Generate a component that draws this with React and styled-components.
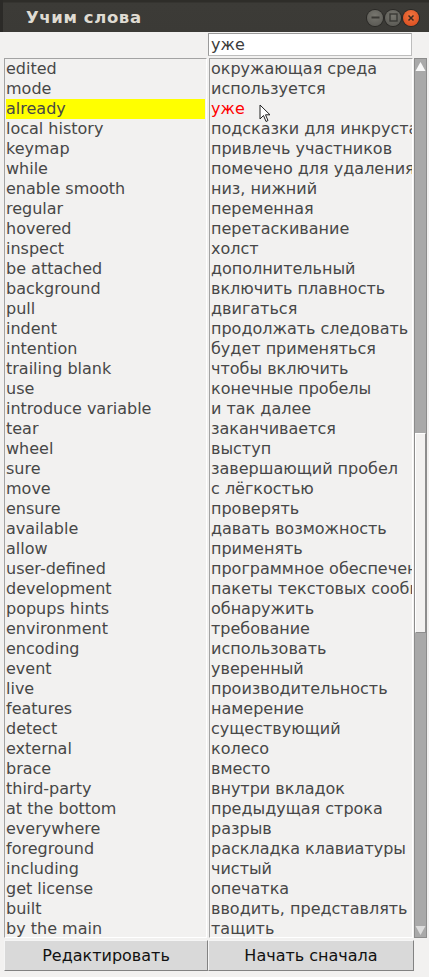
import styled, { createGlobalStyle } from "styled-components"

const GlobalStyle = createGlobalStyle`
	html, body {
		margin: 0;
		padding: 0;
		background: #f2f1f0;
	}
	#root {
		width: 429px;
		height: 977px;
	}
`

const leftWords = [
	"edited", "mode", "already", "local history", "keymap", "while", "enable smooth",
	"regular", "hovered", "inspect", "be attached", "background", "pull", "indent",
	"intention", "trailing blank", "use", "introduce variable", "tear", "wheel", "sure",
	"move", "ensure", "available", "allow", "user-defined", "development", "popups hints",
	"environment", "encoding", "event", "live", "features", "detect", "external", "brace",
	"third-party", "at the bottom", "everywhere", "foreground", "including", "get license",
	"built", "by the main",
]

const rightWords = [
	"окружающая среда", "используется", "уже", "подсказки для инкрустации",
	"привлечь участников", "помечено для удаления", "низ, нижний", "переменная",
	"перетаскивание", "холст", "дополнительный", "включить плавность", "двигаться",
	"продолжать следовать", "будет применяться", "чтобы включить", "конечные пробелы",
	"и так далее", "заканчивается", "выступ", "завершающий пробел", "с лёгкостью",
	"проверять", "давать возможность", "применять", "программное обеспечение",
	"пакеты текстовых сообщений", "обнаружить", "требование", "использовать", "уверенный",
	"производительность", "намерение", "существующий", "колесо", "вместо",
	"внутри вкладок", "предыдущая строка", "разрыв", "раскладка клавиатуры", "чистый",
	"опечатка", "вводить, представлять", "тащить",
]

const Window = styled.div`
	position: relative;
	width: 429px;
	height: 977px;
	background: #f2f1f0;
	font-family: "DejaVu Sans", sans-serif;
	overflow: hidden;
`

const TitleBar = styled.div`
	display: flex;
	align-items: center;
	justify-content: space-between;
	height: 32px;
	box-sizing: border-box;
	padding: 2px 10px 0 23px;
	background: linear-gradient(#2e2d29 0, #2e2d29 2px, #3c3b37 3px, #3b3a36 100%);
	border-left: 3px solid #2b2a27;
`

const Title = styled.div`
	color: #dfdbd2;
	font-family: "DejaVu Sans", sans-serif;
	font-weight: 700;
	font-size: 16.5px;
	letter-spacing: 0.6px;
`

const Controls = styled.div`
	display: flex;
	gap: 2px;
	margin-top: 1px;
`

const Ctl = styled.div`
	width: 16px;
	height: 16px;
	border-radius: 50%;
	display: flex;
	align-items: center;
	justify-content: center;
	background: ${p => (p.$close ? "radial-gradient(circle at 50% 35%, #f0753f, #d8471b)" : "radial-gradient(circle at 50% 35%, #77766f, #55544f)")};
	box-shadow: 0 0 0 1px #2a2926;
`

const Body = styled.div`
	display: flex;
	flex-direction: column;
	padding-left: 4px;
`

const SearchRow = styled.div`
	display: flex;
	height: 26px;
	padding: 1px 0 0 204px;
	box-sizing: border-box;
`

const SearchInput = styled.div`
	width: 204px;
	height: 23px;
	box-sizing: border-box;
	background: #ffffff;
	border: 1px solid #bdbdbd;
	border-top-color: #9a9a9a;
	border-left-color: #9a9a9a;
	font-size: 16px;
	line-height: 21px;
	padding-left: 2px;
	color: #3c3c3c;
`

const Lists = styled.div`
	display: flex;
	height: 880px;
`

const List = styled.div`
	width: ${p => p.$w}px;
	margin-right: ${p => p.$gap}px;
	box-sizing: border-box;
	border: 1px solid #a3a3a3;
	border-right-color: #ffffff;
	border-bottom-color: #ffffff;
	padding: 0 1px;
	overflow: hidden;
`

const Row = styled.div`
	height: 20px;
	line-height: 20px;
	font-size: 16px;
	white-space: nowrap;
	color: ${p => (p.$red ? "#ff0000" : "#474747")};
	background: ${p => (p.$hl ? "#ffff00" : "transparent")};
`

const Scrollbar = styled.div`
	position: relative;
	width: 13px;
	background: #a9a9a9;
	border: 1px solid #8c8c8c;
	box-sizing: border-box;
	display: flex;
	flex-direction: column;
	justify-content: space-between;
`

const Arrow = styled.div`
	height: 14px;
	display: flex;
	align-items: center;
	justify-content: center;
`

const Thumb = styled.div`
	position: absolute;
	left: 0;
	right: 0;
	top: 374px;
	height: 198px;
	background: #f2f1f0;
	border: 1px solid #8e8e8e;
	border-left-color: #ffffff;
	border-top-color: #ffffff;
`

const Buttons = styled.div`
	display: flex;
	margin-top: 2px;
`

const Button = styled.div`
	width: ${p => p.$w}px;
	height: 31px;
	box-sizing: border-box;
	background: #d9d9d9;
	border: 1px solid #828282;
	border-top-color: #f5f5f5;
	border-left-color: #f5f5f5;
	display: flex;
	align-items: center;
	justify-content: center;
	font-size: 16px;
	color: #111111;
	padding-bottom: 1px;
`

const Pointer = styled.svg`
	position: absolute;
	left: 259px;
	top: 104px;
`

export default function App() {
	return (
		<Window>
			<GlobalStyle />
			<TitleBar>
				<Title>Учим слова</Title>
				<Controls>
					<Ctl>
						<svg width="9" height="9" viewBox="0 0 9 9"><rect x="0.5" y="3.5" width="8" height="2" fill="#3a3935" /></svg>
					</Ctl>
					<Ctl>
						<svg width="9" height="9" viewBox="0 0 9 9"><rect x="1" y="1" width="7" height="7" fill="none" stroke="#3a3935" strokeWidth="1.4" /></svg>
					</Ctl>
					<Ctl $close>
						<svg width="8" height="8" viewBox="0 0 8 8"><path d="M1.5 1.5 L6.5 6.5 M6.5 1.5 L1.5 6.5" stroke="#3a2a22" strokeWidth="1.5" /></svg>
					</Ctl>
				</Controls>
			</TitleBar>
			<Body>
				<SearchRow>
					<SearchInput>уже</SearchInput>
				</SearchRow>
				<Lists>
					<List $w={203} $gap={2}>
						{leftWords.map((w, i) => (
							<Row key={i} $hl={w === "already"}>{w}</Row>
						))}
					</List>
					<List $w={204} $gap={1}>
						{rightWords.map((w, i) => (
							<Row key={i} $red={w === "уже"}>{w}</Row>
						))}
					</List>
					<Scrollbar>
						<Arrow>
							<svg width="11" height="11" viewBox="0 0 11 11"><path d="M5.5 1 L10.5 10 L0.5 10 Z" fill="#f7f7f7" /></svg>
						</Arrow>
						<Thumb />
						<Arrow>
							<svg width="11" height="11" viewBox="0 0 11 11"><path d="M0.5 1 L10.5 1 L5.5 10 Z" fill="#dcdcdc" /></svg>
						</Arrow>
					</Scrollbar>
				</Lists>
				<Buttons>
					<Button $w={204}>Редактировать</Button>
					<Button $w={206}>Начать сначала</Button>
				</Buttons>
			</Body>
			<Pointer width="12" height="19" viewBox="0 0 12 19">
				<path d="M1 1 L1 15 L4.5 11.5 L7 17.5 L9 16.5 L6.5 10.8 L11 10.8 Z" fill="#ffffff" stroke="#222" strokeWidth="1" strokeLinejoin="round" />
			</Pointer>
		</Window>
	)
}
